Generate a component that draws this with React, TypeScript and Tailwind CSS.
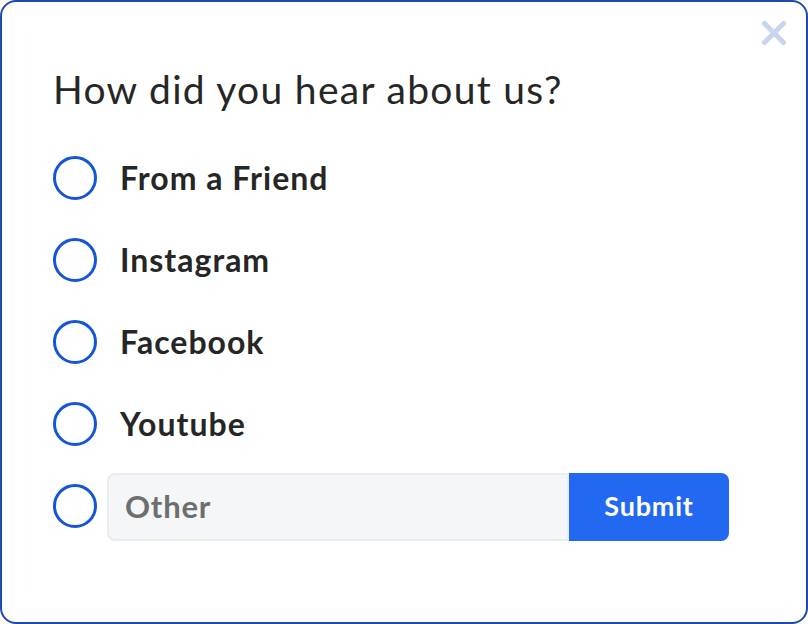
import React from "react";

const options = ["From a Friend", "Instagram", "Facebook", "Youtube"];

function Radio() {
  return <div className="w-[44px] h-[44px] shrink-0 rounded-full border-[3px] border-[#1555d8] bg-white" />;
}

export default function App() {
  return (
    <div
      className="relative w-[808px] h-[624px] bg-white border-2 border-[#1e4aae] rounded-[16px] overflow-hidden"
      style={{ fontFamily: "Lato, 'Open Sans', sans-serif" }}
    >
      <button className="absolute right-[19px] top-[18px] w-[26px] h-[26px] flex items-center justify-center">
        <svg width="26" height="26" viewBox="0 0 26 26">
          <path d="M3.5 3.5 L22.5 22.5 M22.5 3.5 L3.5 22.5" stroke="#c9d4ee" strokeWidth="5" strokeLinecap="round" />
        </svg>
      </button>
      <div className="pl-[51px] pt-[63px] flex flex-col">
        <h1 className="text-[39px] leading-[48px] tracking-[1.3px] text-[#262626] font-normal">How did you hear about us?</h1>
        <div className="mt-[43px] flex flex-col gap-[38px]">
          {options.map((o) => (
            <div key={o} className="flex items-center h-[44px]">
              <Radio />
              <span className="ml-[23px] text-[32px] font-bold tracking-[1px] text-[#262626]">{o}</span>
            </div>
          ))}
          <div className="flex items-center h-[44px]">
            <Radio />
            <div className="ml-[10px] mt-[1px] flex h-[68px] w-[622px]">
              <div className="flex-1 flex items-center bg-[#f4f6f8] border-2 border-[#e9ecf0] rounded-l-[8px] pl-[16px]">
                <span className="text-[31px] font-bold tracking-[0.8px] text-[#6e6e6e]">Other</span>
              </div>
              <div className="w-[160px] flex items-center justify-center bg-[#2268f0] rounded-r-[8px]">
                <span className="text-[27px] font-bold tracking-[0.8px] text-white">Submit</span>
              </div>
            </div>
          </div>
        </div>
      </div>
    </div>
  );
}
